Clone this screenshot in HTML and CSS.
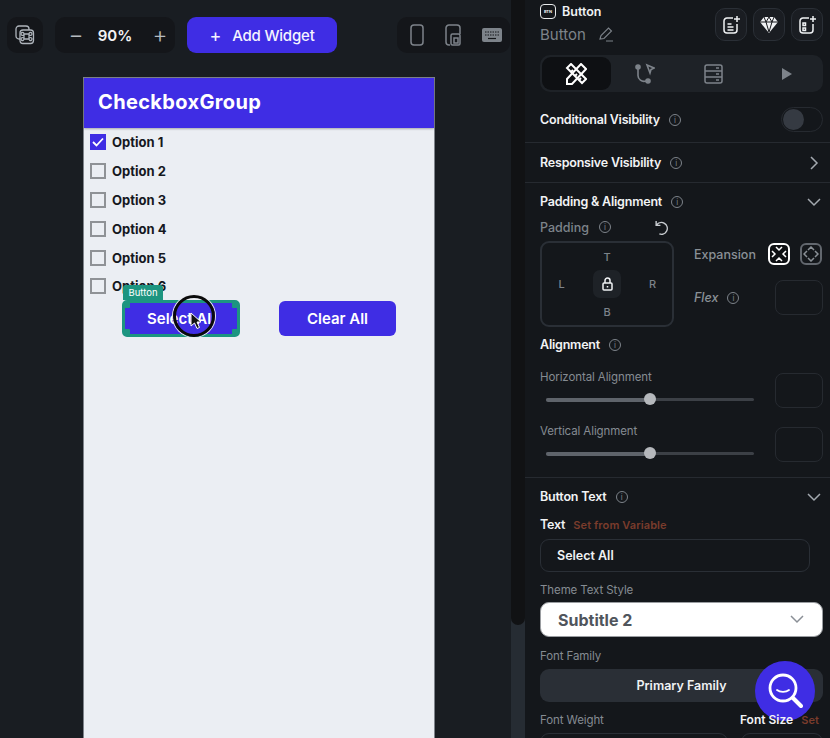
FILE: index.html
```html
<!DOCTYPE html>
<html>
<head>
    <title>Button Properties</title>
    <link rel="stylesheet" href="styles.css">
</head>
<body>
    <div class="canvas">
        <div class="toolbar">
            <div class="tool-box tool-single">
                <svg width="20" height="20" viewBox="0 0 20 20" fill="none" stroke="#aeb4bb" stroke-width="1.3"><rect x="1" y="1" width="13" height="13" rx="3"/><rect x="5" y="5" width="13.500" height="13.500" rx="3" fill="#14161a"/><path d="M9 9h5v5H9zM9 9a1.500 1.500 0 1 1 0-.1M14 9a1.500 1.500 0 1 0 0-.1M9 14a1.500 1.500 0 1 0 0 .1M14 14a1.500 1.500 0 1 1 0 .1"/></svg>
            </div>
            <div class="tool-box tool-zoom">
                <span class="zoom-sign">−</span>
                <span class="zoom-value">90%</span>
                <span class="zoom-sign">+</span>
            </div>
            <div class="add-widget"><span class="add-plus">+</span>Add Widget</div>
            <div class="tool-box tool-devices">
                <svg width="14" height="22" viewBox="0 0 14 22" fill="none" stroke="#7d838a" stroke-width="1.500"><rect x="1" y="1" width="12" height="20" rx="3"/></svg>
                <svg width="16" height="22" viewBox="0 0 16 22" fill="none" stroke="#7d838a" stroke-width="1.500"><path d="M5 21H4a3 3 0 0 1-3-3V4a3 3 0 0 1 3-3h8a3 3 0 0 1 3 3v6"/><rect x="6" y="10" width="9" height="11" rx="1.500"/><rect x="9" y="14" width="4" height="5"/></svg>
                <svg width="20" height="14" viewBox="0 0 20 14"><rect width="20" height="14" rx="2" fill="#7d838a"/><path d="M3 4h14M3 7h14" stroke="#14161a" stroke-width="1.200" stroke-dasharray="1.500 1"/><path d="M6 10.500h8" stroke="#14161a" stroke-width="1.200"/></svg>
            </div>
        </div>
        <div class="phone">
            <div class="app-bar">CheckboxGroup</div>
            <div class="option-list">
                <div class="option"><span class="box box-on"><svg width="12" height="10" viewBox="0 0 12 10" fill="none" stroke="#fff" stroke-width="1.800"><path d="M1 5l3.500 3.500L11 1.500"/></svg></span>Option 1</div>
                <div class="option"><span class="box"></span>Option 2</div>
                <div class="option"><span class="box"></span>Option 3</div>
                <div class="option"><span class="box"></span>Option 4</div>
                <div class="option"><span class="box"></span>Option 5</div>
                <div class="option"><span class="box"></span>Option 6</div>
            </div>
            <div class="button-row">
                <div class="app-button app-button-selected">
                    Select All
                    <span class="select-tag">Button</span>
                    <span class="handle handle-tl"></span>
                    <span class="handle handle-tr"></span>
                    <span class="handle handle-bl"></span>
                    <span class="handle handle-br"></span>
                    <span class="cursor-ring">
                        <svg width="13" height="18" viewBox="0 0 13 18"><path d="M1 1v13l3.500-3 2.500 5.500 2.500-1-2.500-5.500H11z" fill="#111" stroke="#fff" stroke-width="1"/></svg>
                    </span>
                </div>
                <div class="app-button">Clear All</div>
            </div>
        </div>
    </div>

    <div class="panel-gutter"><div class="gutter-thumb"></div></div>

    <div class="panel">
        <div class="panel-head">
            <div>
                <div class="widget-type">
                    <span class="btn-badge">BTN</span>
                    Button
                </div>
                <div class="widget-name">
                    Button
                    <svg width="15" height="15" viewBox="0 0 15 15" fill="none" stroke="#7d838a" stroke-width="1.100"><path d="M1 12l1-3.500L9.500 1l3 3L5 11.500zM7 14h7"/></svg>
                </div>
            </div>
            <div class="head-actions">
                <div class="head-btn"><svg width="17" height="18" viewBox="0 0 17 18" fill="none" stroke="#f0f2f4" stroke-width="1.500"><path d="M10 2H4a3 3 0 0 0-3 3v9a3 3 0 0 0 3 3h7a3 3 0 0 0 3-3V8M4.500 8h4M4.500 11h6M4.500 14h6M14 0v6M11 3h6"/></svg></div>
                <div class="head-btn"><svg width="18" height="16" viewBox="0 0 18 16"><path d="M4 0h10l4 5-9 11L0 5z" fill="#f0f2f4"/><path d="M0 5h18M6 5l3 10 3-10M4 0l2 5 3-5 3 5 2-5" fill="none" stroke="#14161a" stroke-width="1"/></svg></div>
                <div class="head-btn"><svg width="17" height="18" viewBox="0 0 17 18" fill="none" stroke="#f0f2f4" stroke-width="1.500"><path d="M10 2H4a3 3 0 0 0-3 3v9a3 3 0 0 0 3 3h7a3 3 0 0 0 3-3V8M14 0v6M11 3h6"/><rect x="4" y="7" width="2.500" height="2.500"/><rect x="4" y="12" width="2.500" height="2.500"/></svg></div>
            </div>
        </div>

        <div class="tabs">
            <div class="tab tab-active"><svg width="22" height="22" viewBox="0 0 22 22" fill="none" stroke="#fff" stroke-width="2"><path d="M6 1l15 15-4 4L2 5zM6 9l2-2M10 13l2-2M14 17l2-2"/><path d="M16 1l5 5-14 15H2v-5z"/></svg></div>
            <div class="tab"><svg width="20" height="22" viewBox="0 0 20 22" fill="none" stroke="#7d838a" stroke-width="1.600"><circle cx="3" cy="4" r="2" fill="#7d838a"/><circle cx="13" cy="18" r="2" fill="#7d838a"/><path d="M3 6v6a6 6 0 0 0 8 6M12 2l7 3-3 1.500L15 10z"/></svg></div>
            <div class="tab"><svg width="19" height="20" viewBox="0 0 19 20" fill="none" stroke="#7d838a" stroke-width="1.500"><rect x="1" y="1" width="17" height="18" rx="2"/><path d="M1 7h17M1 13h17M12 4h3M12 10h3M12 16h3"/></svg></div>
            <div class="tab tab-play"><svg width="12" height="14" viewBox="0 0 12 14"><path d="M1 1l10 6-10 6z" fill="#7d838a"/></svg></div>
        </div>

        <div class="section section-cond">
            <div class="row-title">Conditional Visibility <span class="info">i</span></div>
            <div class="toggle"><span class="toggle-knob"></span></div>
        </div>
        <div class="section section-resp">
            <div class="row-title">Responsive Visibility <span class="info">i</span></div>
            <svg class="chev-right" width="9" height="14" viewBox="0 0 9 14" fill="none" stroke="#a3a9af" stroke-width="1.500"><path d="M1 1l6 6-6 6"/></svg>
        </div>

        <div class="section section-padding">
            <div class="row-title title-spaced">Padding &amp; Alignment <span class="info">i</span>
                <svg class="chev-down" width="14" height="9" viewBox="0 0 14 9" fill="none" stroke="#a3a9af" stroke-width="1.500"><path d="M1 1l6 6 6-6"/></svg>
            </div>
            <div class="padding-label">
                <span>Padding</span> <span class="info">i</span>
                <svg class="undo" width="15" height="15" viewBox="0 0 14 14" fill="none" stroke="#c9cdd1" stroke-width="1.300"><path d="M2 1v4h4M2.500 4.500A5.500 5.500 0 1 1 5 13"/></svg>
            </div>
            <div class="padding-row">
                <div class="padding-box">
                    <span></span><span>T</span><span></span>
                    <span>L</span>
                    <span class="lock"><svg width="11" height="14" viewBox="0 0 11 14" fill="none" stroke="#f0f2f4" stroke-width="1.500"><rect x="1" y="6" width="9" height="7" rx="1"/><path d="M3 6V3.500a2.500 2.500 0 0 1 5 0V6M5.500 9v1.500"/></svg></span>
                    <span>R</span>
                    <span></span><span>B</span><span></span>
                </div>
                <div class="expansion">
                    <div class="expansion-row">
                        <span class="expansion-label">Expansion</span>
                        <span class="exp-btn exp-on"><svg width="16" height="16" viewBox="0 0 16 16" fill="none" stroke="#fff" stroke-width="1.500"><path d="M5 1l3 3 3-3M5 15l3-3 3 3M1 5l3 3-3 3M15 5l-3 3 3 3"/></svg></span>
                        <span class="exp-btn"><svg width="16" height="16" viewBox="0 0 16 16" fill="none" stroke="#8a9096" stroke-width="1.500"><path d="M5 4l3-3 3 3M5 12l3 3 3-3M4 5L1 8l3 3M12 5l3 3-3 3"/></svg></span>
                    </div>
                    <div class="flex-row">
                        <span class="flex-label">Flex</span> <span class="info">i</span>
                        <span class="empty-input empty-flex"></span>
                    </div>
                </div>
            </div>
            <div class="row-title align-title">Alignment <span class="info">i</span></div>
            <div class="slider-row">
                <div class="slider-col">
                    <div class="small-label">Horizontal Alignment</div>
                    <div class="slider"><span class="slider-fill"></span><span class="slider-knob"></span></div>
                </div>
                <span class="empty-input"></span>
            </div>
            <div class="slider-row">
                <div class="slider-col">
                    <div class="small-label">Vertical Alignment</div>
                    <div class="slider"><span class="slider-fill"></span><span class="slider-knob"></span></div>
                </div>
                <span class="empty-input"></span>
            </div>
        </div>

        <div class="section section-text">
            <div class="row-title title-spaced">Button Text <span class="info">i</span>
                <svg class="chev-down" width="14" height="9" viewBox="0 0 14 9" fill="none" stroke="#a3a9af" stroke-width="1.500"><path d="M1 1l6 6 6-6"/></svg>
            </div>
            <div class="text-label">Text <span class="variable">Set from Variable</span></div>
            <div class="text-input">Select All</div>
            <div class="small-label label-theme">Theme Text Style</div>
            <div class="theme-select">
                Subtitle 2
                <svg width="14" height="9" viewBox="0 0 14 9" fill="none" stroke="#8a8f96" stroke-width="1.500"><path d="M1 1l6 6 6-6"/></svg>
            </div>
            <div class="small-label label-family">Font Family</div>
            <div class="family-select">Primary Family</div>
            <div class="font-row">
                <span class="small-label">Font Weight</span>
                <span class="font-size-label">Font Size <span class="variable">Set</span></span>
            </div>
            <div class="font-inputs"><span></span><span></span></div>
        </div>
    </div>

    <div class="help-btn">
        <svg width="36" height="38" viewBox="0 0 36 38" fill="none" stroke="#fff"><circle cx="16" cy="16" r="13" stroke-width="2.800"/><path d="M26 26l8 8" stroke-width="4" stroke-linecap="round"/><path d="M10 18c3 2.500 9 2.500 12 0" stroke-width="1.800" stroke-linecap="round"/></svg>
    </div>
</body>
</html>
```

FILE: styles.css
```css
html, body {
    height: 100%;
}
body {
    margin: 0;
    display: flex;
    width: 830px;
    height: 738px;
    overflow: hidden;
    position: relative;
    background: #14171b;
    font-family: 'Inter', 'Liberation Sans', sans-serif;
    color: #f0f2f4;
}
.canvas {
    width: 511px;
    flex: none;
    background: #191d22;
    overflow: hidden;
}
.toolbar {
    display: flex;
    align-items: center;
    height: 36px;
    margin-top: 17px;
    padding-left: 7px;
}
.tool-box {
    background: #14161a;
    border-radius: 10px;
    height: 36px;
    display: flex;
    align-items: center;
}
.tool-single {
    width: 36px;
    justify-content: center;
}
.tool-zoom {
    width: 120px;
    margin-left: 12px;
    justify-content: space-between;
    padding: 0 7px 0 13px;
    box-sizing: border-box;
}
.zoom-sign {
    color: #b6bbc0;
    font-size: 23px;
    font-weight: 300;
    width: 16px;
    text-align: center;
}
.zoom-value {
    font-size: 15px;
    font-weight: 600;
    color: #f2f3f5;
    margin-left: -6px;
}
.add-widget {
    width: 150px;
    height: 36px;
    margin-left: 12px;
    background: #3f2de4;
    border-radius: 9px;
    display: flex;
    align-items: center;
    justify-content: center;
    font-size: 15px;
    font-weight: 500;
    letter-spacing: -0.2px;
    color: #f4f3ff;
}
.add-plus {
    font-size: 18px;
    margin-right: 11px;
    font-weight: 400;
}
.tool-devices {
    width: 113px;
    margin-left: 60px;
    gap: 21px;
    padding-left: 13px;
    box-sizing: border-box;
}
.phone {
    width: 350px;
    height: 700px;
    margin: 24px 0 0 83px;
    background: #ebeef3;
    border: 1px solid #7e838a;
    border-bottom: none;
}
.app-bar {
    height: 50px;
    background: #3f2de4;
    color: #fff;
    font-size: 20px;
    font-weight: 700;
    letter-spacing: 0.35px;
    line-height: 48px;
    padding-left: 14px;
    box-shadow: 0 1px 2px rgba(0, 0, 0, 0.3);
}
.option-list {
    padding: 0 6px;
}
.option {
    height: 28.800px;
    display: flex;
    align-items: center;
    font-size: 13px;
    font-weight: 700;
    color: #15181e;
    gap: 6px;
}
.box {
    width: 16px;
    height: 16px;
    box-sizing: border-box;
    border: 2px solid #8f9296;
    display: flex;
    align-items: center;
    justify-content: center;
}
.box-on {
    background: #3f2de4;
    border-color: #3f2de4;
}
.button-row {
    display: flex;
    align-items: center;
    margin: -1px 0 0 38px;
    gap: 39px;
}
.app-button {
    width: 117px;
    height: 35px;
    border-radius: 6px;
    background: #3f2de4;
    color: #fff;
    font-size: 15px;
    font-weight: 600;
    display: flex;
    align-items: center;
    justify-content: center;
    position: relative;
    box-sizing: border-box;
}
.app-button-selected {
    width: 118px;
    height: 37px;
    border: 3px solid #1d9580;
    border-radius: 5px;
}
.select-tag {
    position: absolute;
    left: -2px;
    top: -18px;
    width: 40px;
    height: 15px;
    background: #1d9580;
    color: #fff;
    font-size: 9.500px;
    font-weight: 400;
    line-height: 15px;
    text-align: center;
    border-radius: 3px 3px 0 0;
}
.handle {
    position: absolute;
    width: 6px;
    height: 6px;
    background: #1d9580;
    border-radius: 1px;
}
.handle-tl { left: -1px; top: -1px; }
.handle-tr { right: -1px; top: -1px; }
.handle-bl { left: -1px; bottom: -1px; }
.handle-br { right: -1px; bottom: -1px; }
.cursor-ring {
    position: absolute;
    left: 48px;
    top: -8px;
    width: 42px;
    height: 42px;
    box-sizing: border-box;
    border: 3px solid #0a0a0a;
    border-radius: 50%;
    box-shadow: 0 0 0 1px #e8e8ee;
    display: flex;
    align-items: center;
    justify-content: center;
    padding: 10px 0 0 4px;
}
.panel-gutter {
    width: 14px;
    flex: none;
    background: #262c33;
}
.gutter-thumb {
    height: 625px;
    background: #111214;
    border-radius: 0 0 7px 7px;
}
.panel {
    width: 305px;
    flex: none;
    box-sizing: border-box;
    padding: 0 7px 0 15px;
    font-size: 12.500px;
    overflow: hidden;
}
.panel-head {
    display: flex;
    justify-content: space-between;
    padding-top: 3px;
    height: 51px;
    box-sizing: border-box;
}
.widget-type {
    display: flex;
    align-items: center;
    gap: 6px;
    font-weight: 600;
    font-size: 12.500px;
    height: 16px;
}
.btn-badge {
    width: 14px;
    height: 13px;
    border: 1.500px solid #e8eaec;
    border-radius: 4px;
    font-size: 4px;
    line-height: 13px;
    text-align: center;
    font-weight: 700;
}
.widget-name {
    margin-top: 6px;
    color: #7d838a;
    font-size: 15px;
    display: flex;
    align-items: center;
    gap: 13px;
}
.head-actions {
    display: flex;
    gap: 6px;
    padding-top: 5px;
}
.head-btn {
    width: 32px;
    height: 33px;
    border: 1px solid #2a2f36;
    background: #1a1d22;
    border-radius: 10px;
    display: flex;
    align-items: center;
    justify-content: center;
    box-sizing: border-box;
}
.tabs {
    height: 37px;
    background: #1e2227;
    border-radius: 10px;
    display: flex;
    margin-top: 4px;
    padding: 2px;
    box-sizing: border-box;
}
.tab {
    flex: 1;
    display: flex;
    align-items: center;
    justify-content: center;
    border-radius: 9px;
}
.tab-active {
    background: #0e1013;
}
.tab-play {
    padding-left: 5px;
}
.info {
    display: inline-block;
    width: 10px;
    height: 10px;
    line-height: 10px;
    border: 1px solid #7d838a;
    border-radius: 50%;
    color: #7d838a;
    font-size: 8px;
    font-weight: 400;
    text-align: center;
    margin-left: 6px;
    vertical-align: 1px;
}
.section {
    margin: 0 -7px 0 -15px;
    padding: 0 7px 0 15px;
    position: relative;
}
.section-cond {
    height: 51px;
    display: flex;
    align-items: center;
    justify-content: space-between;
    border-bottom: 1px solid #262a30;
    box-sizing: border-box;
    padding-top: 4px;
}
.section-resp {
    height: 40px;
    display: flex;
    align-items: center;
    justify-content: space-between;
    border-bottom: 1px solid #262a30;
    box-sizing: border-box;
}
.row-title {
    font-weight: 600;
    font-size: 12.500px;
    letter-spacing: -0.2px;
    color: #f2f3f5;
}
.toggle {
    width: 42px;
    height: 25px;
    box-sizing: border-box;
    border: 1px solid #262a30;
    border-radius: 13px;
    padding: 1px;
}
.toggle-knob {
    display: block;
    width: 21px;
    height: 21px;
    border-radius: 50%;
    background: #353a42;
}
.chev-right {
    margin-right: 4px;
}
.title-spaced {
    position: relative;
}
.chev-down {
    position: absolute;
    right: 2px;
    top: 4px;
}
.section-padding {
    padding-top: 11px;
    height: 295px;
    box-sizing: border-box;
    border-bottom: 1px solid #262a30;
}
.padding-label {
    display: flex;
    align-items: center;
    margin-top: 11px;
    height: 14px;
    color: #7d838a;
    font-weight: 500;
    font-size: 12.500px;
}
.padding-label .info {
    margin-left: 10px;
}
.undo {
    margin-left: 43px;
}
.padding-row {
    display: flex;
    margin-top: 7px;
}
.padding-box {
    width: 134px;
    height: 86px;
    flex: none;
    box-sizing: border-box;
    border: 2px solid #2a2f36;
    border-radius: 9px;
    display: grid;
    grid-template-columns: 39px 1fr 39px;
    grid-template-rows: 1fr 28px 1fr;
    justify-items: center;
    align-items: center;
    color: #7d838a;
    font-size: 11px;
    font-weight: 500;
}
.lock {
    width: 28px;
    height: 28px;
    border-radius: 7px;
    background: #1e2227;
    display: flex;
    align-items: center;
    justify-content: center;
}
.expansion {
    flex: 1;
    padding-left: 20px;
}
.expansion-row {
    display: flex;
    align-items: center;
    margin-top: 2px;
    color: #8a9096;
    font-weight: 500;
}
.expansion-label {
    width: 64px;
    font-size: 12.500px;
}
.exp-btn {
    width: 22px;
    height: 22px;
    box-sizing: border-box;
    border: 2px solid #62676e;
    border-radius: 6px;
    display: flex;
    align-items: center;
    justify-content: center;
    margin-left: 10px;
}
.exp-on {
    border-color: #fff;
    background: #0e1013;
}
.flex-row {
    display: flex;
    align-items: center;
    margin-top: 15px;
}
.flex-label {
    font-style: italic;
    color: #8a9096;
    font-weight: 500;
}
.flex-row .info {
    margin-left: 9px;
}
.empty-input {
    width: 48px;
    height: 35px;
    flex: none;
    box-sizing: border-box;
    border: 1px solid #262a30;
    border-radius: 8px;
    display: block;
}
.empty-flex {
    margin-left: auto;
}
.align-title {
    margin-top: 10px;
}
.slider-row {
    display: flex;
    justify-content: space-between;
    align-items: flex-start;
    margin-top: 18px;
}
.slider-row .empty-input {
    margin-top: 3px;
}
.slider-row + .slider-row {
    margin-top: 16px;
}
.slider-col {
    width: 240px;
}
.small-label {
    color: #858b92;
    font-size: 11.500px;
    font-weight: 400;
    letter-spacing: -0.1px;
}
.slider {
    position: relative;
    height: 3px;
    margin: 14px 21px 0 6px;
    background: #3c4046;
    border-radius: 2px;
}
.slider-fill {
    display: block;
    height: 4px;
    width: 104px;
    background: #5f646b;
    border-radius: 2px;
}
.slider-knob {
    position: absolute;
    left: 98px;
    top: -5px;
    width: 12px;
    height: 12px;
    border-radius: 50%;
    background: #b5b8bc;
}
.section-text {
    padding-top: 11px;
}
.text-label {
    font-weight: 600;
    font-size: 12.500px;
    margin-top: 13px;
    letter-spacing: -0.2px;
}
.variable {
    color: #7a3c2c;
    font-size: 11px;
    font-weight: 600;
    margin-left: 5px;
    letter-spacing: 0.1px;
}
.text-input {
    width: 270px;
    height: 33px;
    margin-top: 7px;
    box-sizing: border-box;
    border: 1px solid #2a2f36;
    border-radius: 9px;
    line-height: 31px;
    padding-left: 16px;
    font-weight: 600;
    font-size: 12.500px;
}
.label-theme {
    margin-top: 11px;
}
.theme-select {
    height: 35px;
    margin-top: 5px;
    background: #fff;
    border: 1px solid #9a9da1;
    border-radius: 9px;
    box-sizing: border-box;
    color: #50555c;
    font-weight: 700;
    font-size: 16px;
    display: flex;
    align-items: center;
    justify-content: space-between;
    padding: 0 18px 0 17px;
}
.label-family {
    margin-top: 12px;
}
.family-select {
    height: 33px;
    margin-top: 6px;
    background: #2a2f36;
    border-radius: 9px;
    text-align: center;
    line-height: 33px;
    font-weight: 600;
    font-size: 12.500px;
}
.font-row {
    display: flex;
    justify-content: space-between;
    margin-top: 10px;
    align-items: baseline;
}
.font-size-label {
    position: relative;
    z-index: 1;
    margin-right: 4px;
    font-weight: 600;
    font-size: 12px;
    color: #f2f3f5;
}
.font-inputs {
    display: flex;
    gap: 13px;
    margin-top: 6px;
}
.font-inputs span {
    display: block;
    width: 188px;
    height: 30px;
    border: 1px solid #2a2f36;
    border-radius: 9px;
    box-sizing: border-box;
}
.font-inputs span + span {
    width: 82px;
}
.help-btn {
    position: absolute;
    left: 755px;
    top: 661px;
    width: 60px;
    height: 60px;
    border-radius: 50%;
    background: #3f2de4;
    display: flex;
    align-items: center;
    justify-content: center;
}
```
